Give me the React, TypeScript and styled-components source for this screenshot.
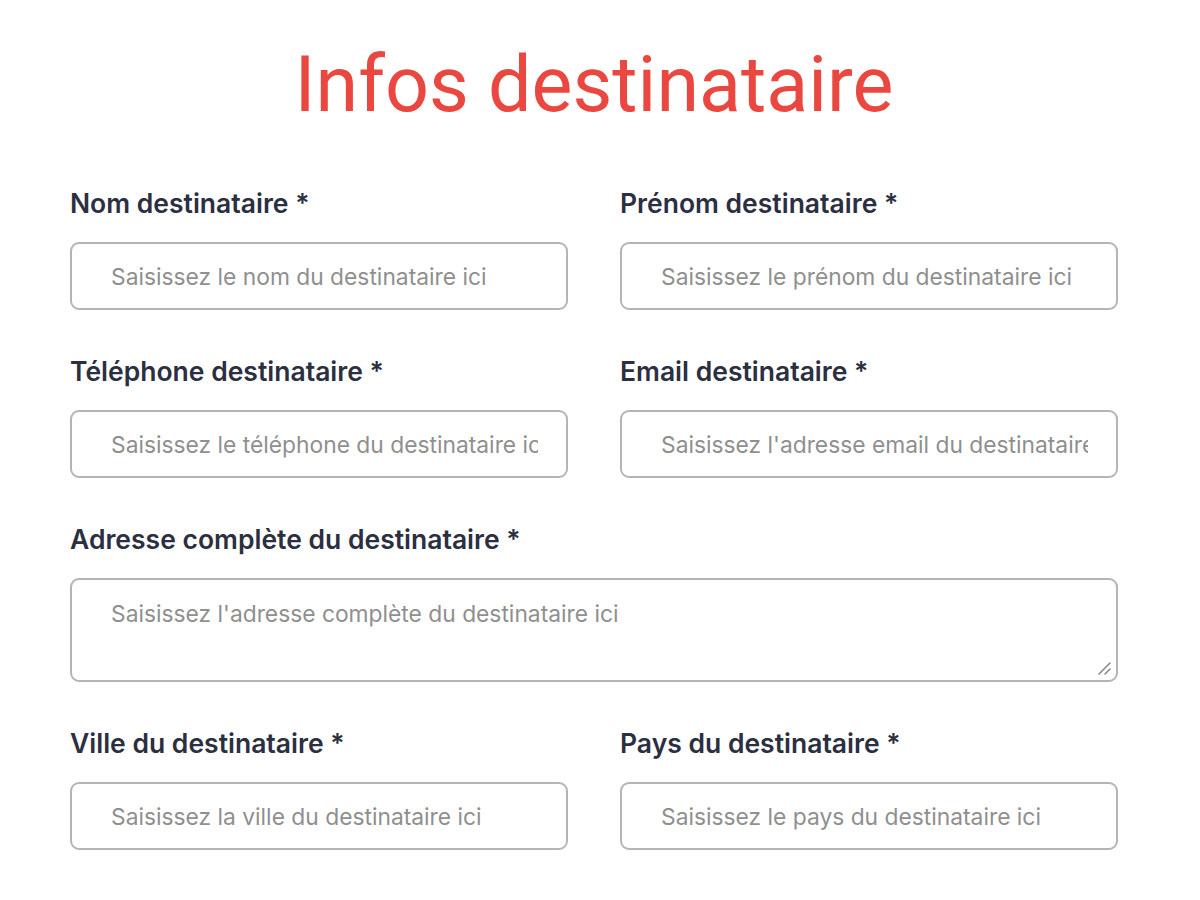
import React from 'react';
import styled, { createGlobalStyle } from 'styled-components';

const GlobalStyle = createGlobalStyle`
    body {
        margin: 0;
        background: #ffffff;
        font-family: Inter, 'Liberation Sans', sans-serif;
    }
`;

type Field = {
    label: string;
    placeholder: string;
    wide?: boolean;
    multiline?: boolean;
};

const fields: Field[] = [
    { label: 'Nom destinataire *', placeholder: 'Saisissez le nom du destinataire ici' },
    { label: 'Prénom destinataire *', placeholder: 'Saisissez le prénom du destinataire ici' },
    { label: 'Téléphone destinataire *', placeholder: 'Saisissez le téléphone du destinataire ici' },
    { label: 'Email destinataire *', placeholder: "Saisissez l'adresse email du destinataire ici" },
    {
        label: 'Adresse complète du destinataire *',
        placeholder: "Saisissez l'adresse complète du destinataire ici",
        wide: true,
        multiline: true,
    },
    { label: 'Ville du destinataire *', placeholder: 'Saisissez la ville du destinataire ici' },
    { label: 'Pays du destinataire *', placeholder: 'Saisissez le pays du destinataire ici' },
];

const App: React.FC = () => {
    return (
        <Page>
            <GlobalStyle />
            <Title>Infos destinataire</Title>
            <Form>
                {fields.map((field) => (
                    <FieldGroup key={field.label} wide={field.wide}>
                        <Label>{field.label}</Label>
                        {field.multiline ? (
                            <TextAreaWrap>
                                <TextArea placeholder={field.placeholder} />
                                <ResizeGrip viewBox="0 0 16 16" aria-hidden>
                                    <path d="M3 14 L14 3 M9 14 L14 9" />
                                </ResizeGrip>
                            </TextAreaWrap>
                        ) : (
                            <Input type="text" placeholder={field.placeholder} />
                        )}
                    </FieldGroup>
                ))}
            </Form>
        </Page>
    );
};
export default App;

const Page = styled.div`
    width: 1048px;
    padding: 38px 82px 40px 70px;
`;
const Title = styled.h1`
    margin: 0 0 55px 0;
    text-align: center;
    font-family: Roboto, 'Liberation Sans', sans-serif;
    font-weight: 400;
    font-size: 77.2px;
    line-height: 94px;
    color: #e9473f;
`;
const Form = styled.div`
    display: grid;
    grid-template-columns: 1fr 1fr;
    column-gap: 52px;
    row-gap: 45px;
`;
const FieldGroup = styled.div<{ wide?: boolean }>`
    display: flex;
    flex-direction: column;
    gap: 23px;
    grid-column: ${(p) => (p.wide ? '1 / -1' : 'auto')};
`;
const Label = styled.label`
    font-size: 26.5px;
    line-height: 32px;
    font-weight: 600;
    color: #2b2f3f;
`;
const baseField = `
    box-sizing: border-box;
    width: 100%;
    border: 2px solid #b5b5b5;
    border-radius: 9px;
    background: #ffffff;
    font-family: Inter, 'Liberation Sans', sans-serif;
    font-size: 22.8px;
    color: #2b2f3f;
    padding: 0 28px 0 39px;
    outline: none;
    &::placeholder {
        color: #8f8f8f;
    }
`;
const Input = styled.input`
    ${baseField}
    height: 68px;
`;
const TextAreaWrap = styled.div`
    position: relative;
`;
const TextArea = styled.textarea`
    ${baseField}
    display: block;
    height: 104px;
    padding-top: 20px;
    line-height: 28px;
    resize: none;
`;
const ResizeGrip = styled.svg`
    position: absolute;
    right: 6px;
    bottom: 6px;
    width: 16px;
    height: 16px;
    fill: none;
    stroke: #8a8a8a;
    stroke-width: 1.6;
    stroke-linecap: round;
    pointer-events: none;
`;
